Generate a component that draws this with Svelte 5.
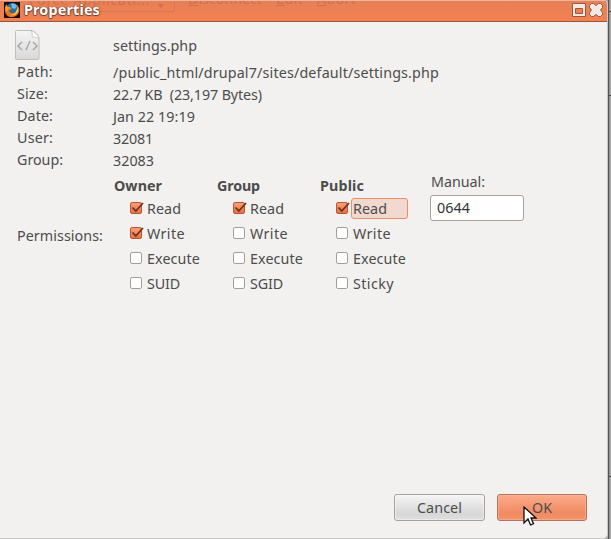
<script>
  const details = [
    ['Path:', '/public_html/drupal7/sites/default/settings.php', 36, 326],
    ['Size:', '22.7 KB\u00a0 (23,197 Bytes)', 31, 149],
    ['Date:', 'Jan 22 19:19', 36, 82],
    ['User:', '32081', 36, 40],
    ['Group:', '32083', 46, 41]
  ];
  const groups = $state([
    { name: 'Owner', w: 48, items: [['Read', true, 34], ['Write', true, 38], ['Execute', false, 53], ['SUID', false, 33]] },
    { name: 'Group', w: 43, items: [['Read', true, 34], ['Write', false, 38], ['Execute', false, 53], ['SGID', false, 33]] },
    { name: 'Public', w: 44, items: [['Read', true, 34], ['Write', false, 38], ['Execute', false, 53], ['Sticky', false, 41]] }
  ]);

  // Tracks the text so that a label takes up the given advance width.
  function fit(node, width) {
    const natural = node.getBoundingClientRect().width;
    node.style.letterSpacing = `${(width - natural) / node.textContent.length}px`;
  }
</script>

<div class="screen">
  <div class="dialog">
    <header>
      <div class="behind">
        <div class="combo"><span use:fit={121}>Force Applicati...</span><i></i></div>
        <span class="menu" use:fit={74}><u>D</u>isconnect</span>
        <span class="menu edit" use:fit={27}><u>E</u>dit</span>
        <span class="menu abort" use:fit={39}><u>A</u>bort</span>
      </div>
      <svg class="fox" width="16" height="16" viewBox="0 0 16 16">
        <rect width="16" height="16" fill="#141018" />
        <circle cx="8.3" cy="7.5" r="6.5" fill="#286da9" />
        <path d="M7 2c3-1 5 0 6 2L11 7 8 6Z" fill="#75b9dc" />
        <path d="M2 2 1 6C0 12 4 16 9 15c5-1 7-5 6-9l-2-4c1 5 0 8-3 9-3 1-5-1-5-3l3-1-2-2-2 0Z" fill="#e87916" />
        <path d="m13 3 1 5c0 4-4 6-8 5 5 0 8-4 7-10Z" fill="#ffd057" />
        <path d="m2 4 2 1 3 1-3 1-1 3C1 8 1 6 2 4Z" fill="#f6a02b" />
      </svg>
      <h1><span use:fit={76}>Properties</span></h1>
      <svg class="controls" width="34" height="17" viewBox="0 0 34 17">
        <path d="M1.5 1.5h13v13h-13z" fill="#f2e9e3" stroke="#98583d" />
        <path d="M4.5 6.5h7v5h-7z" fill="#f08050" stroke="#98583d" />
        <path d="m20.5 1.500 2 0 2.500 2 2.500-2 2 0 2 2 0 2-2 2.500 2 2.500 0 2-2 2-2 0-2.500-2-2.500 2-2 0-2-2 0-2 2-2.500-2-2.500 0-2Z" fill="#f2e9e3" stroke="#98583d" stroke-linejoin="round" />
      </svg>
    </header>

    <main>
      <div class="file">
        <svg width="26" height="31" viewBox="0 0 26 31">
          <defs><linearGradient id="page" x2="0" y2="1"><stop stop-color="#f5f5f5" /><stop offset="1" stop-color="#d8d8d8" /></linearGradient></defs>
          <path d="M.5 1.5q0-1 1-1H16c3 0 8 5 8 8v20q0 1-1 1H1.5q-1 0-1-1Z" fill="url(#page)" stroke="#bebebe" />
          <path d="M16 1c2 2 1 5 1 6 2 0 5 0 7 2 0-3-5-8-8-8Z" fill="#fff" stroke="#c2c2c2" stroke-width=".8" />
          <path d="m7 12-4 4 4 4m11-8 4 4-4 4m-3-9-4 9" fill="none" stroke="#a8a8a8" stroke-width="1.5" />
        </svg>
        <span use:fit={84}>settings.php</span>
      </div>
      {#each details as [label, value, lw, vw]}
        <div class="row"><div class="label"><span use:fit={lw}>{label}</span></div><div class="value"><span use:fit={vw}>{value}</span></div></div>
      {/each}

      <section>
        <div class="perm"><span use:fit={86}>Permissions:</span></div>
        {#each groups as group, g}
          <div class="group">
            <h2><span use:fit={group.w}>{group.name}</span></h2>
            {#each group.items as item, i}
              <label>
                <input type="checkbox" bind:checked={item[1]} />
                <svg width="15" height="14" viewBox="0 0 15 14">
                  <defs><linearGradient id="tick-{g}-{i}" x2="0" y2="1"><stop stop-color="#ffa07a" /><stop offset="1" stop-color="#eb6d3d" /></linearGradient></defs>
                  <rect x=".5" y="1.5" width="11" height="11" rx="1.6" fill={item[1] ? `url(#tick-${g}-${i})` : '#fff'} stroke={item[1] ? '#b65532' : '#a09d9a'} />
                  {#if item[1]}<path d="m2.5 6.5 3.3 3.5L13 2" fill="none" stroke="#653524" stroke-width="1.8" />{/if}
                </svg>
                <span class="caption" class:focused={g === 2 && i === 0}><span use:fit={item[2]}>{item[0]}</span></span>
              </label>
            {/each}
          </div>
        {/each}
        <div class="manual">
          <span use:fit={54}>Manual:</span>
          <div class="field"><span use:fit={33}>0644</span></div>
        </div>
      </section>

      <footer>
        <button><span use:fit={45}>Cancel</span></button>
        <button class="ok"><span use:fit={20}>OK</span>
          <svg class="pointer" width="14" height="21" viewBox="0 0 14 21"><path d="M1 1v16l4-4 2.500 6 3-1.300L8 12h5Z" fill="#fff" stroke="#111" stroke-width="1.3" /></svg>
        </button>
      </footer>
    </main>
  </div>
  <div class="edge"><i class="top"></i><i class="upper"></i><i class="lower"></i></div>
</div>

<style>
  :global(body) { margin: 0; overflow: hidden; }
  .screen { width: 611px; height: 539px; display: flex; background: #aaa; font: 14.3px/20px "Noto Sans", "Open Sans", sans-serif; color: #4c4c4c; }
  .screen * { box-sizing: border-box; }
  span { white-space: pre; display: inline-block; }
  .dialog { width: 608px; height: 539px; display: flex; flex-direction: column; background: #f2f1ef; border-bottom: 1px solid #c9c8c6; border-right: 1px solid #c9c8c6; border-radius: 0 5px 5px 0; overflow: hidden; }
  .edge { position: relative; width: 3px; background: linear-gradient(90deg, #555 0 1px, #929292 1px 2px, #aaa 2px); }
  .edge i { position: absolute; left: 1px; width: 2px; height: 1px; background: #444; }
  .top { top: 11px; }
  .upper { top: 95px; }
  .lower { top: 476px; }
  header { position: relative; height: 22px; flex: none; display: flex; align-items: flex-start; padding: 2px 2px 0 4px; background: linear-gradient(#e68057, #f58050); border-top: 1px solid #efb6a0; border-bottom: 1px solid #91583f; overflow: hidden; }
  .behind { position: absolute; left: 28px; top: -12px; display: flex; color: #c96e4c; opacity: .8; }
  .combo { display: flex; width: 147px; height: 23px; border: 1px solid #d17755; border-radius: 3px; }
  .combo i { margin: 14px 0 0 8px; border: 3px solid transparent; border-top: 4px solid #c96e4c; height: 4px; }
  .menu { margin-left: 13px; }
  .edit, .abort { margin-left: 14px; }
  .fox { flex: none; margin-top: -1px; }
  h1, h2 { margin: 0; font-size: 14.3px; line-height: 20px; font-weight: 700; }
  h1 { flex: 1; position: relative; color: #fff; margin: -3px 0 0 4px; text-shadow: 0 1px 1px #6b3c2b, 1px 0 1px #8b4c34, -1px 0 1px #8b4c34; }
  .controls { margin-top: -1px; }
  main { flex: 1; display: flex; flex-direction: column; padding: 8px 20px 17px 15px; }
  .file { display: flex; height: 31px; gap: 72px; }
  .file > span { margin-top: 6px; }
  .row { display: grid; grid-template-columns: 96px 1fr; height: 22px; padding-left: 2px; }
  .label { padding-top: 1px; }
  .value { padding-top: 2px; }
  section { display: flex; height: 130px; margin-top: 4px; padding-left: 2px; }
  .perm { width: 97px; padding-top: 51px; flex: none; }
  .group { width: 103px; flex: none; padding-top: 1px; }
  h2 { height: 20px; }
  label { display: flex; height: 25px; align-items: center; padding-left: 16px; }
  label svg { flex: none; margin-top: -2px; }
  input { position: absolute; opacity: 0; width: 1px; height: 1px; }
  .caption { height: 21px; border: 1px solid transparent; padding-left: 1px; line-height: 19px; }
  .focused { width: 57px; border-color: #ee8c66; border-radius: 3px; background: #f1d9cf; }
  .manual { margin-left: 7px; margin-top: -3px; }
  .manual > span { margin-left: 1px; display: block; width: max-content; }
  .field { width: 94px; height: 26px; margin-top: 3px; border: 1px solid #a5a29f; border-radius: 3px; background: #fff; padding: 2px 6px; color: #333; }
  footer { display: flex; justify-content: flex-end; gap: 12px; margin-top: auto; }
  button { position: relative; width: 91px; height: 27px; padding: 0; font: inherit; color: #4c4c4c; border: 1px solid #a5a3a1; border-radius: 3px; background: linear-gradient(#f5f5f5, #d7d7d7 75%, #dfdfdf); box-shadow: inset 0 0 0 1px #ffffff66; }
  .ok { width: 90px; border-color: #b5735a; background: linear-gradient(#fbab8b, #f08a61 75%, #f3956e); box-shadow: inset 0 0 0 1px #ffb99c88; }
  .pointer { position: absolute; left: 25px; top: 11px; }
</style>
